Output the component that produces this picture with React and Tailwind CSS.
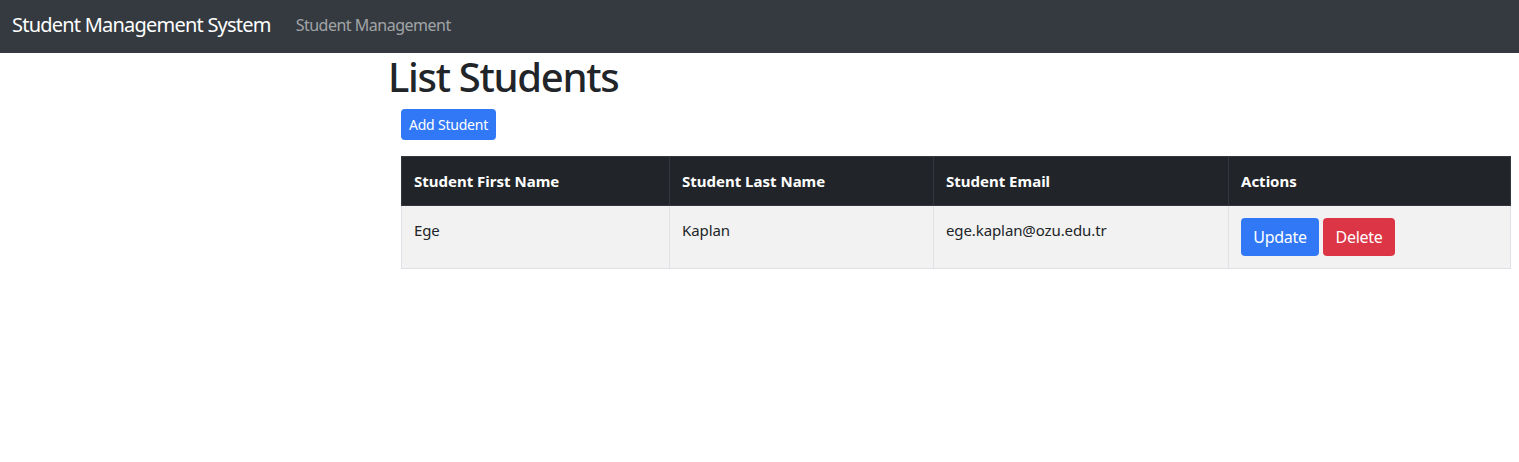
export default function App() {
  const font = { fontFamily: '"Noto Sans", "Open Sans", sans-serif' };
  return (
    <div className="min-h-[462px] bg-white text-[#212529]" style={font}>
      <nav className="flex h-[53px] items-center bg-[#343a40] px-3 pb-[3px]">
        <span className="text-[20px] leading-[30px] text-white tracking-[-0.78px]">Student Management System</span>
        <span className="ml-[25px] text-[16px] leading-6 text-[rgba(255,255,255,0.55)] tracking-[-0.5px]">Student Management</span>
      </nav>
      <div className="pl-[388px] pr-2">
        <h1 className="text-[40px] font-medium leading-[48px] tracking-[-1.3px]">List Students</h1>
        <div className="pl-[13px]">
          <button className="mt-[8px] h-[31px] w-[95px] rounded-[4px] bg-[#3078f6] text-[14px] text-white tracking-[-0.2px]">Add Student</button>
          <table className="mt-[16px] w-[1110px] border-collapse text-[15px]">
            <thead>
              <tr className="bg-[#212529] text-white">
                <th className="w-[268px] border border-[#32383e] px-3 h-[49px] text-left font-bold">Student First Name</th>
                <th className="w-[264px] border border-[#32383e] px-3 text-left font-bold">Student Last Name</th>
                <th className="w-[295px] border border-[#32383e] px-3 text-left font-bold">Student Email</th>
                <th className="border border-[#32383e] px-3 text-left font-bold">Actions</th>
              </tr>
            </thead>
            <tbody>
              <tr className="bg-[#f2f2f2]">
                <td className="border border-[#dee2e6] px-3 py-3 align-top leading-6 tracking-[-0.1px]">Ege</td>
                <td className="border border-[#dee2e6] px-3 py-3 align-top leading-6 tracking-[-0.1px]">Kaplan</td>
                <td className="border border-[#dee2e6] px-3 py-3 align-top leading-6 tracking-[-0.1px]">ege.kaplan@ozu.edu.tr</td>
                <td className="border border-[#dee2e6] px-3 py-3 align-top">
                  <div className="flex gap-1">
                    <button className="h-[38px] w-[78px] rounded-[4px] bg-[#3078f6] text-[16px] text-white tracking-[-0.3px]">Update</button>
                    <button className="h-[38px] w-[72px] rounded-[4px] bg-[#dc3545] text-[16px] text-white tracking-[-0.3px]">Delete</button>
                  </div>
                </td>
              </tr>
            </tbody>
          </table>
        </div>
      </div>
    </div>
  );
}
